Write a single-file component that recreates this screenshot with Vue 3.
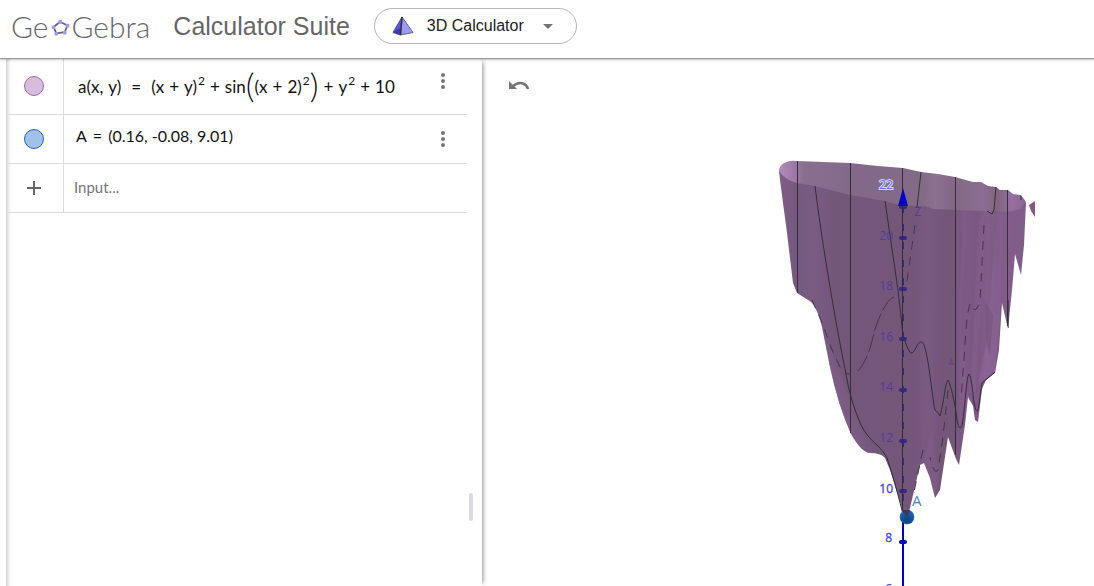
<script setup>
import { ref } from 'vue'

const entry = ref('')
const app = ref('3D Calculator')

const labels = [
  { n: 20, y: 240 }, { n: 18, y: 290 }, { n: 16, y: 341 },
  { n: 14, y: 391 }, { n: 12, y: 442 },
]
const ticks = [207, 238, 289, 339, 390, 441, 491]
</script>

<template>
  <div class="page">
    <header class="bar">
      <a class="brand" href="#" aria-label="GeoGebra Calculator Suite">
        <span class="logo">
          <span>Ge</span>
          <svg class="penta" viewBox="0 0 18 16" aria-hidden="true">
            <path d="M8.500 2.500L15.500 6L13 12.500L5 13.500L2.500 7.500Z" fill="none" stroke="#666" stroke-width="1.700" />
            <g fill="#9999ff">
              <rect x="7" y="1" width="3.400" height="3.400" rx="1" /><rect x="14" y="4.500" width="3.400" height="3.400" rx="1" />
              <rect x="11.300" y="11.300" width="3.400" height="3.400" rx="1" /><rect x="3.300" y="12.200" width="3.400" height="3.400" rx="1" />
              <rect x="0.700" y="6" width="3.400" height="3.400" rx="1" />
            </g>
          </svg>
          <span>Gebra</span>
        </span>
        <span class="suite">Calculator Suite</span>
      </a>
      <button class="picker" type="button" aria-haspopup="menu">
        <svg class="pyramid" viewBox="0 0 22 20" aria-hidden="true">
          <path d="M10 1L1 16.500L8.500 19Z" fill="#5252ff" stroke="#555" />
          <path d="M10 1L21 16.500L8.500 19Z" fill="#9999ff" stroke="#666" />
          <path d="M1 16L8 12L8.500 19Z" fill="#3838b8" />
          <path d="M10 1L8.500 19" stroke="#333" stroke-width="1.500" />
        </svg>
        <span>{{ app }}</span>
        <svg class="caret" viewBox="0 0 10 5" aria-hidden="true"><path d="M0 0H10L5 5Z" fill="#757575" /></svg>
      </button>
    </header>

    <main class="body">
      <section class="algebra" aria-label="Algebra">
        <div class="row first">
          <div class="mark"><button class="dot violet" type="button" aria-label="Show or hide a"></button></div>
          <div class="formula">
            <span>a(x,<i class="thin"></i>y)</span><span class="eq">=</span><span>(x</span><span class="op">+</span><span>y)</span><sup>2</sup><span class="op">+</span><span>sin</span><span class="big">(</span><span>(x</span><span class="op">+</span><span>2)</span><sup>2</sup><span class="big">)</span><span class="op">+</span><span>y</span><sup>2</sup><span class="op">+</span><span>10</span>
          </div>
          <button class="more" type="button" aria-label="More options for a">
            <svg viewBox="0 0 4 16"><g fill="#757575"><circle cx="2" cy="2" r="2" /><circle cx="2" cy="8" r="2" /><circle cx="2" cy="14" r="2" /></g></svg>
          </button>
        </div>
        <div class="row">
          <div class="mark"><button class="dot blue" type="button" aria-label="Show or hide A"></button></div>
          <div class="value"><span>A</span><span class="is">=</span><span>(0.16, -0.08, 9.01)</span></div>
          <button class="more" type="button" aria-label="More options for A">
            <svg viewBox="0 0 4 16"><g fill="#757575"><circle cx="2" cy="2" r="2" /><circle cx="2" cy="8" r="2" /><circle cx="2" cy="14" r="2" /></g></svg>
          </button>
        </div>
        <div class="row">
          <div class="mark">
            <button class="plus" type="button" aria-label="Add">
              <svg viewBox="0 0 14 14"><path d="M7 0V14M0 7H14" stroke="#666" stroke-width="2" /></svg>
            </button>
          </div>
          <input v-model="entry" class="entry" type="text" placeholder="Input..." aria-label="Input" />
        </div>
        <div class="grip"></div>
      </section>

      <section class="view" aria-label="3D Graphics">
        <svg class="scene" viewBox="482 59 612 527" preserveAspectRatio="xMinYMin slice" role="img" aria-label="Surface a and point A">
          <defs>
            <linearGradient id="front" gradientUnits="userSpaceOnUse" x1="779" y1="0" x2="1027" y2="0">
              <stop offset="0" stop-color="#805d89" /><stop offset=".07" stop-color="#75597e" />
              <stop offset=".14" stop-color="#7a5c83" /><stop offset=".22" stop-color="#735779" />
              <stop offset=".54" stop-color="#745679" /><stop offset=".6" stop-color="#785980" />
              <stop offset=".65" stop-color="#745679" /><stop offset=".7" stop-color="#745679" />
              <stop offset=".75" stop-color="#7d5a85" /><stop offset=".8" stop-color="#7a5882" />
              <stop offset=".84" stop-color="#835d8b" /><stop offset=".88" stop-color="#7d5a85" />
              <stop offset=".92" stop-color="#835d8b" /><stop offset="1" stop-color="#7f5c87" />
            </linearGradient>
            <linearGradient id="back" gradientUnits="userSpaceOnUse" x1="779" y1="0" x2="1027" y2="0">
              <stop offset="0" stop-color="#b18abb" /><stop offset=".05" stop-color="#a27dab" />
              <stop offset=".1" stop-color="#8a6e90" /><stop offset=".3" stop-color="#82698a" />
              <stop offset=".58" stop-color="#836a87" /><stop offset=".63" stop-color="#8d7092" />
              <stop offset=".7" stop-color="#826884" /><stop offset=".82" stop-color="#8c6e92" />
              <stop offset=".88" stop-color="#80657f" /><stop offset=".94" stop-color="#966f9f" />
              <stop offset="1" stop-color="#896791" />
            </linearGradient>
            <linearGradient id="edge" gradientUnits="userSpaceOnUse" x1="800" y1="400" x2="850" y2="382">
              <stop offset=".4" stop-color="#8b6394" /><stop offset="1" stop-color="#8b6394" stop-opacity="0" />
            </linearGradient>
            <linearGradient id="fade" x1="0" y1="0" x2="0" y2="1">
              <stop offset="0" stop-color="#94699f" stop-opacity=".35" /><stop offset="1" stop-color="#94699f" />
            </linearGradient>
            <radialGradient id="ball" cx=".5" cy=".7" r=".6"><stop offset="0" stop-color="#123f7c" /><stop offset="1" stop-color="#1764b8" /></radialGradient>
          </defs>

          <path d="M779 171Q779 166 784 163Q790 160 797 161L850 163L878 166L903 168L921 172L938 174L955 177L973 182L981 182L988 186L996 187L1000 190L1008 190L1013 194L1021 195L1026 202L1024 214H903L797 190L779 173Z" fill="url(#back)" />
          <path d="M779 171Q785 180 797 183L815 186L850 195L885 201L903 206H925L933 209L955 210L985 211L991 213L994 211L1007 212L1020 209L1026 202L1024 245L1021 275L1015 254L1012 290L1008 329L1002 303L999 350L995 373L986 380L982 389L978 422L975 420L973 406L968 397L965 425L959 465L956 459L948 437L940 490L935 498L930 478L924 463L920 465L910 508L907 518L902 508L890 470L885 458Q881 453 870 453Q862 453 851 434Q838 405 830 367L822 327Q816 303 808 300L797 293L793 283L787 233L780 180Z" fill="url(#front)" />
          <path d="M797 293L808 300Q818 307 824 334L841 374L861 427L885 455L870 453Q862 453 851 434Q838 405 830 367L822 327Q816 303 808 300Z" fill="url(#edge)" />
          <g fill="url(#fade)" opacity=".5">
            <path d="M919 210H926L936 430L929 470L921 450Z" opacity=".2" />
            <path d="M963 212H967L961 330L968 397L959 430L959 300Z" opacity=".6" />
            <path d="M978 220L985 212L981 300L975 405L971 390Z" opacity=".6" />
            <path d="M997 212H1003L1000 320L995 371L978 384L987 340Z" />
            <path d="M924 463L931 430L939 470L935 498L930 478Z" opacity=".5" />
          </g>
          <path d="M985 302L993 315L990 356L986 340Z" fill="#735776" opacity=".6" />
          <path d="M951 357L955 365H948Z" fill="#69447b" opacity=".7" />
          <path d="M1029 205L1035 201V217L1031 211Z" fill="#805b88" />

          <g fill="none" stroke="#352e39" stroke-width="1">
            <path d="M797.500 161V293M850.500 163V433M902.500 168V510M955.500 177V455M1007.500 190V326" />
            <path d="M1008.500 300V328M902.500 210V500" opacity=".6" />
            <path d="M815 186C823 250 836 325 846 374Q850 400 861 425C870 443 880 444 887 458Q893 475 903 514" />
            <path d="M885 201L898 290L903 335Q909 355 912 353C916 351 917 341 922 342C928 345 932 399 935 410Q938 412 940 416C944 402 945 383 948 380C951 386 955 402 957 420Q959 432 962 426C966 401 966 378 969 374C973 378 973 414 978 411Q980 398 982 383L995 372" />
            <path d="M921 172L917 207M996 187L994 210L992 214L987 211M1021 196V200" />
          </g>
          <g fill="none" stroke="#493450" stroke-width="1" stroke-dasharray="9 7">
            <path d="M812 300L821 320L833 352L840 367Q844 374 850 374" />
            <path d="M858 371Q869 359 874 332Q886 296 897 296" stroke-dasharray="18 4" />
            <path d="M915 225L906 288M984 225L980 302L977 308Q974 313 971 303Q968 305 966 330L961 400" />
            <path d="M948 390L943 437L938 470Q934 476 930 457M923 450L914 492" />
          </g>

          <g stroke="#37268c" stroke-width="2">
            <path d="M903 206V510" stroke-dasharray="7 11" />
            <path v-for="t in ticks" :key="t" :d="`M901 ${t}H905`" stroke-width="4" stroke-linecap="round" />
          </g>
          <path d="M903 188L908 206H898Z" fill="#0000d0" />
          <path d="M903 520V586" stroke="#0000c8" stroke-width="2" />
          <path d="M901 542H905" stroke="#0000c8" stroke-width="4" stroke-linecap="round" />
          <path d="M902.500 206V515" stroke="#302a35" stroke-width="1" />

          <g class="num" text-anchor="end">
            <text x="893" y="189" class="halo">22</text>
            <text v-for="l in labels" :key="l.n" x="893" :y="l.y" class="deep">{{ l.n }}</text>
            <text x="893" y="493" class="bright">10</text>
            <text x="892" y="542" class="bright">8</text>
            <text x="892" y="593" class="bright">6</text>
            <text x="921" y="216" class="deep">Z</text>
          </g>
          <circle cx="907" cy="517" r="7.300" fill="url(#ball)" />
          <path d="M902 510L907 517L910 510Z" fill="#3f3459" />
          <text x="912" y="506" class="point">A</text>
        </svg>
        <button class="undo" type="button" aria-label="Undo">
          <svg viewBox="0 0 22 12">
            <path d="M1 1V9H9Z" fill="#757575" />
            <path d="M4.500 6.500Q10 1.500 15 3.500Q19 5 20 9" fill="none" stroke="#757575" stroke-width="2.500" />
          </svg>
        </button>
      </section>
    </main>
  </div>
</template>

<style>
body { margin: 0; background: #fff; }
</style>

<style scoped>
.page { display: flex; flex-direction: column; height: 100vh; overflow: hidden; font-family: "Liberation Sans", Arial, sans-serif; color: #212121; }
button { padding: 0; border: 0; background: none; font: inherit; color: inherit; cursor: pointer; }
svg { display: block; }
.bar { position: relative; z-index: 2; display: flex; align-items: center; box-sizing: border-box; height: 59px; padding: 0 12px 6px 11px; border-bottom: 1px solid #999; box-shadow: 0 1px 2px rgba(0, 0, 0, .25); background: #fff; }
.brand { display: flex; align-items: center; gap: 23px; color: #666; text-decoration: none; white-space: nowrap; }
.logo { display: flex; align-items: center; gap: 2px; font: 300 30px/32px Lato, sans-serif; }
.penta { width: 19px; height: 17px; margin-top: 3px; }
.suite { font-size: 25px; line-height: 32px; }
.picker { display: flex; align-items: center; box-sizing: border-box; height: 36px; margin-left: 24px; padding: 0 23px 0 17px; border: 1px solid #b5b5ba; border-radius: 18px; font-size: 16px; white-space: nowrap; }
.pyramid { width: 22px; height: 20px; margin-right: 13px; }
.caret { width: 10px; height: 5px; margin-left: 19px; }
.body { display: flex; flex: 1; min-height: 0; padding-left: 6px; }
.algebra { position: relative; z-index: 1; flex: 0 0 44%; box-sizing: border-box; max-width: 476px; padding-right: 15px; background: #fff; border-radius: 0 4px 0 0; box-shadow: inset 6px 0 5px -5px #bbb, 4px 0 4px -3px rgba(0, 0, 0, .45); }
.row { display: flex; box-sizing: border-box; height: 49px; border-bottom: 1px solid #dcdcdc; }
.first { height: 56px; }
.mark { display: flex; flex: 0 0 58px; box-sizing: border-box; align-items: center; justify-content: center; padding-right: 1px; border-right: 1px solid #dcdcdc; }
.first .mark { padding-bottom: 1px; }
.dot { box-sizing: border-box; width: 20px; height: 20px; border: 1px solid; border-radius: 50%; }
.violet { border-color: #a168ae; background: #d6bddc; }
.blue { border-color: #1764c0; background: #a2c1e8; }
.formula, .value { display: flex; flex: 1; align-items: center; padding-left: 14px; font: 17px/20px Lato, "Noto Sans", sans-serif; color: #111; white-space: pre; }
.value { padding: 0 0 7px 12px; font-size: 16px; }
.is { margin: 0 6px; }
.thin { display: inline-block; width: 5px; }
.eq { margin: 0 10px; }
.op { margin: 0 5px; }
.formula sup { margin-left: 1px; padding-bottom: 11px; font-size: 12px; line-height: 12px; }
.big { padding-bottom: 4px; font-weight: 300; font-size: 34px; line-height: 30px; }
.more { align-self: center; width: 20px; height: 32px; margin: 0 14px 0 0; }
.first .more { margin-bottom: 12px; }
.more svg { width: 4px; height: 16px; margin: 0 auto; }
.plus svg { width: 14px; height: 14px; }
.entry { flex: 1; min-width: 0; margin: 0; padding: 0 0 2px 10px; border: 0; outline: 0; background: none; font: 15px/20px Lato, "Noto Sans", sans-serif; }
.entry::placeholder { color: #757575; opacity: 1; }
.grip { position: absolute; right: 9px; bottom: 65px; width: 4px; height: 28px; border-radius: 2px; background: #dadae0; }
.view { position: relative; flex: 1; min-width: 0; overflow: hidden; }
.scene { position: absolute; inset: 0; width: 100%; height: 100%; }
.undo { position: absolute; left: 26px; top: 21px; }
.undo svg { width: 22px; height: 12px; }
.num { font: 12px "Open Sans", sans-serif; }
.deep { fill: #553aa0; }
.halo { fill: #6868ff; stroke: #d8d8ff; stroke-width: 2px; paint-order: stroke; }
.bright { fill: #4040ff; stroke: #4040ff; stroke-width: .3px; }
.point { font: 15px "Open Sans", sans-serif; fill: #4288d0; }
</style>
